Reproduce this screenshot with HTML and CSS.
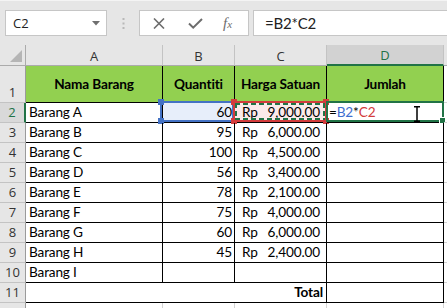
FILE: index.html
```html
<!DOCTYPE html>
<html lang="id">
<head>
    <meta charset="UTF-8">
    <meta name="viewport" content="width=device-width, initial-scale=1.0">
    <title>Daftar Barang</title>
    <link rel="stylesheet" href="styles.css">
</head>
<body>
    <div class="toolbar">
        <div class="namebox">
            <span>C2</span>
            <svg class="dropdown" width="8" height="5" viewBox="0 0 8 5"><path d="M0 0H8L4 4.5Z" fill="#6f6f6f"/></svg>
        </div>
        <svg class="grip" width="3" height="11" viewBox="0 0 3 11">
            <rect x="0.5" y="0" width="2" height="2" fill="#b8b8b8"/>
            <rect x="0.5" y="4.5" width="2" height="2" fill="#b8b8b8"/>
            <rect x="0.5" y="9" width="2" height="2" fill="#b8b8b8"/>
        </svg>
        <div class="fn-buttons">
            <svg class="btn-cancel" width="12" height="11" viewBox="0 0 12 11"><path d="M1 0.5L11 10.5M11 0.5L1 10.5" stroke="#6d6d6d" stroke-width="1.6"/></svg>
            <svg class="btn-enter" width="15" height="11" viewBox="0 0 15 11"><path d="M1 5.5L5.2 9.6L14 1" fill="none" stroke="#6d6d6d" stroke-width="2"/></svg>
            <span class="btn-fx">f<small>x</small></span>
        </div>
        <div class="formula">=B2*C2</div>
    </div>

    <div class="sheet">
        <!-- column headers -->
        <div class="corner"><span class="corner-tri"></span></div>
        <div class="col-head">A</div>
        <div class="col-head">B</div>
        <div class="col-head">C</div>
        <div class="col-head active">D</div>
        <div class="col-head"></div>

        <!-- row 1 -->
        <div class="row-head tall">1</div>
        <div class="cell head">Nama Barang</div>
        <div class="cell head">Quantiti</div>
        <div class="cell head">Harga Satuan</div>
        <div class="cell head">Jumlah</div>
        <div class="cell blank"></div>

        <!-- row 2 -->
        <div class="row-head active">2</div>
        <div class="cell">Barang A</div>
        <div class="cell num ref-b">60
            <span class="ref-box blue"><i class="hd tl"></i><i class="hd bl"></i></span>
        </div>
        <div class="cell money ref-c"><span>Rp</span><span>9,000.00</span>
            <span class="ref-box red"><i class="hd tl"></i><i class="hd tr"></i><i class="hd bl"></i><i class="hd br"></i></span>
            <span class="ants"></span>
        </div>
        <div class="cell editing">=<b class="r-blue">B2</b>*<b class="r-red">C2</b>
            <span class="active-box"><i class="fill-handle"></i></span>
            <svg class="ibeam" width="8" height="16" viewBox="0 0 8 16"><path d="M1 0.75H7M1 15.25H7M4 0.75V15.25" fill="none" stroke="#000" stroke-width="1.5"/></svg>
        </div>
        <div class="cell blank"></div>

        <div class="row-head">3</div>
        <div class="cell">Barang B</div>
        <div class="cell num">95</div>
        <div class="cell money"><span>Rp</span><span>6,000.00</span></div>
        <div class="cell"></div>
        <div class="cell blank"></div>

        <div class="row-head">4</div>
        <div class="cell">Barang C</div>
        <div class="cell num">100</div>
        <div class="cell money"><span>Rp</span><span>4,500.00</span></div>
        <div class="cell"></div>
        <div class="cell blank"></div>

        <div class="row-head">5</div>
        <div class="cell">Barang D</div>
        <div class="cell num">56</div>
        <div class="cell money"><span>Rp</span><span>3,400.00</span></div>
        <div class="cell"></div>
        <div class="cell blank"></div>

        <div class="row-head">6</div>
        <div class="cell">Barang E</div>
        <div class="cell num">78</div>
        <div class="cell money"><span>Rp</span><span>2,100.00</span></div>
        <div class="cell"></div>
        <div class="cell blank"></div>

        <div class="row-head">7</div>
        <div class="cell">Barang F</div>
        <div class="cell num">75</div>
        <div class="cell money"><span>Rp</span><span>4,000.00</span></div>
        <div class="cell"></div>
        <div class="cell blank"></div>

        <div class="row-head">8</div>
        <div class="cell">Barang G</div>
        <div class="cell num">60</div>
        <div class="cell money"><span>Rp</span><span>6,000.00</span></div>
        <div class="cell"></div>
        <div class="cell blank"></div>

        <div class="row-head">9</div>
        <div class="cell">Barang H</div>
        <div class="cell num">45</div>
        <div class="cell money"><span>Rp</span><span>2,400.00</span></div>
        <div class="cell"></div>
        <div class="cell blank"></div>

        <div class="row-head">10</div>
        <div class="cell">Barang I</div>
        <div class="cell"></div>
        <div class="cell"></div>
        <div class="cell"></div>
        <div class="cell blank"></div>

        <div class="row-head">11</div>
        <div class="cell total">Total</div>
        <div class="cell"></div>
        <div class="cell blank"></div>

        <!-- row 12, only its top edge shows -->
        <div class="row-head"></div>
        <div class="cell blank"></div>
        <div class="cell blank"></div>
        <div class="cell blank"></div>
        <div class="cell blank"></div>
        <div class="cell blank"></div>
    </div>
</body>
</html>
```

FILE: styles.css
```css
body {
    margin: 0;
    width: 447px;
    height: 308px;
    overflow: hidden;
    background-color: #fff;
    font-family: Lato, "Liberation Sans", sans-serif;
}

/* formula bar */
.toolbar {
    display: flex;
    align-items: center;
    height: 45px;
    box-sizing: border-box;
    padding: 0 0 0 5px;
    background-color: #e6e6e6;
    border-top: 1px solid #f4f4f4;
}

.namebox {
    display: flex;
    align-items: center;
    justify-content: space-between;
    width: 102px;
    height: 26px;
    box-sizing: border-box;
    padding: 0 6px 0 7px;
    background-color: #fff;
    border: 1px solid #c6c6c6;
    font-family: "Open Sans", sans-serif;
    font-size: 13px;
    color: #222;
}

.grip {
    margin: 0 14px 0 15px;
}

.fn-buttons {
    display: flex;
    align-items: center;
    width: 110px;
    height: 26px;
    box-sizing: border-box;
    padding-left: 13px;
    background-color: #fff;
    border: 1px solid #c6c6c6;
}

.btn-enter {
    margin-left: 23px;
}

.btn-fx {
    margin-left: 20px;
    font-family: "Liberation Serif", serif;
    font-style: italic;
    font-size: 15px;
    color: #6d6d6d;
}

.btn-fx small {
    font-size: 11px;
}

.formula {
    flex: 1;
    height: 26px;
    margin-left: 4px;
    box-sizing: border-box;
    padding: 3px 0 0 11px;
    background-color: #fff;
    border: 1px solid #c6c6c6;
    border-right: none;
    font-size: 15px;
    letter-spacing: -0.2px;
    color: #222;
}

/* sheet grid */
.sheet {
    display: grid;
    grid-template-columns: 26px 137px 72px 92px 117px 1fr;
    grid-template-rows: 21px 37px repeat(11, 20px);
    font-size: 13.6px;
    letter-spacing: -0.15px;
    color: #000;
}

.corner,
.col-head,
.row-head {
    box-sizing: border-box;
    background-color: #e6e6e6;
    border-right: 1px solid #c3c3c3;
    border-bottom: 1px solid #c3c3c3;
    font-family: "Open Sans", sans-serif;
    font-size: 13px;
    letter-spacing: 0;
    color: #333;
}

.corner {
    position: relative;
    border-right-color: #ababab;
    border-bottom-color: #ababab;
}

.corner-tri {
    position: absolute;
    right: 3px;
    bottom: 3px;
    width: 0;
    height: 0;
    border-left: 12px solid transparent;
    border-bottom: 12px solid #b5b5b5;
}

.col-head {
    display: flex;
    align-items: center;
    justify-content: center;
    padding-top: 1px;
    border-bottom-color: #ababab;
}

.col-head.active {
    background-color: #d2d2d2;
    color: #217346;
    border-bottom: 2px solid #217346;
}

.row-head {
    display: flex;
    align-items: flex-end;
    justify-content: center;
    line-height: 19px;
    border-right-color: #9b9b9b;
}

.row-head.active {
    background-color: #d9d9d9;
    color: #217346;
    border-right: 2px solid #217346;
}

.cell {
    position: relative;
    box-sizing: border-box;
    padding: 0 3px;
    line-height: 19px;
    white-space: nowrap;
    border-right: 1px solid #000;
    border-bottom: 1px solid #000;
}

.cell.blank {
    border-right-color: #d4d4d4;
    border-bottom-color: #d4d4d4;
}

.cell.head {
    display: flex;
    align-items: center;
    justify-content: center;
    padding-top: 1px;
    background-color: #92d050;
    font-weight: bold;
}

.cell.num {
    text-align: right;
    padding-right: 2px;
}

.cell.money {
    display: flex;
    justify-content: space-between;
    padding: 0 6px 0 7px;
}

.cell.total {
    grid-column: span 3;
    text-align: right;
    font-weight: bold;
}

/* formula references */
.ref-b {
    background-color: #e7eefa;
}

.ref-c {
    background-color: #fbeaea;
}

.ref-box {
    position: absolute;
    top: -2px;
    bottom: 0;
    border: 2px solid;
}

.ref-box.blue {
    left: -3px;
    right: 0;
    border-color: #4472c4;
}

.ref-box.red {
    left: -2px;
    right: -1px;
    border-color: #d33c3c;
}

.hd {
    position: absolute;
    width: 6px;
    height: 6px;
}

.blue .hd {
    background-color: #4472c4;
}

.red .hd {
    background-color: #d33c3c;
}

.hd.tl { left: -4px; top: -4px; }
.hd.tr { right: -4px; top: -4px; }
.hd.bl { left: -4px; bottom: -4px; }
.hd.br { right: -4px; bottom: -4px; }

/* marching ants around the picked cell */
.ants {
    position: absolute;
    top: 0;
    left: 0;
    right: 1px;
    bottom: 2px;
    background:
        linear-gradient(90deg, #217346 5px, transparent 5px) top left / 8px 2px repeat-x,
        linear-gradient(90deg, #217346 5px, transparent 5px) bottom left / 8px 2px repeat-x,
        linear-gradient(180deg, #217346 5px, transparent 5px) top left / 2px 8px repeat-y,
        linear-gradient(180deg, #217346 5px, transparent 5px) top right / 2px 8px repeat-y;
}

.editing {
    padding-left: 2px;
}

.editing b {
    font-weight: normal;
}

.r-blue {
    color: #3f6fcf;
}

.r-red {
    color: #d33c3c;
}

.active-box {
    position: absolute;
    top: -2px;
    left: -1px;
    right: -1px;
    bottom: 0;
    border: 2px solid #217346;
}

.fill-handle {
    position: absolute;
    right: -4px;
    bottom: -4px;
    width: 5px;
    height: 5px;
    background-color: #217346;
    border: 1px solid #fff;
}

.ibeam {
    position: absolute;
    left: 86px;
    top: 3px;
}
```
